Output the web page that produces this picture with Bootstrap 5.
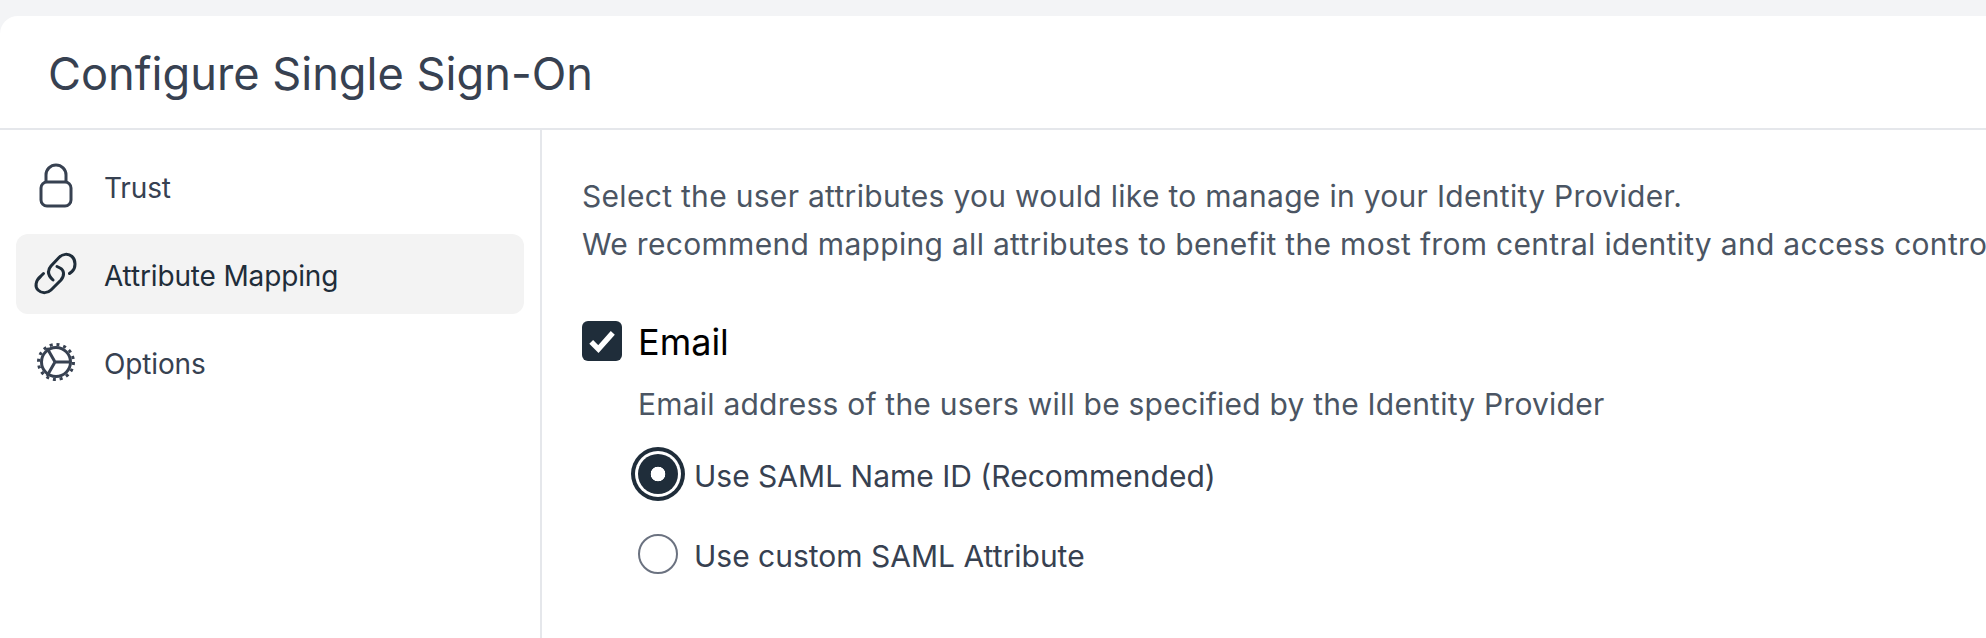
<!DOCTYPE html>
<html lang="en">
<head>
    <meta charset="UTF-8">
    <meta name="viewport" content="width=device-width, initial-scale=1.0">
    <title>Configure Single Sign-On</title>
    <link href="https://cdn.jsdelivr.net/npm/bootstrap@5.3.0/dist/css/bootstrap.min.css" rel="stylesheet">
    <style>
        html, body { height: 100%; overflow: hidden; }
        body { background: #f3f4f6; padding-top: 16px; font-family: Inter, "Liberation Sans", sans-serif; color: #4b5563; }
        .sso-panel { height: 622px; background: #fff; border-top-left-radius: 18px; }
        .sso-head { height: 114px; flex: none; padding: 4px 0 0 48px; border-bottom: 2px solid #e5e7eb; }
        .sso-title { font-size: 45.2px; font-weight: 400; color: #374151; margin: 0; line-height: 56px; }
        .sso-side { width: 542px; flex: none; padding: 16px 16px 0; border-right: 2px solid #e5e7eb; }
        .sso-item { height: 80px; margin-bottom: 8px; padding-left: 16px; border-radius: 12px; font-size: 28px; letter-spacing: -0.15px; color: #374151; gap: 24px; text-decoration: none; }
        .sso-item span { padding-top: 3px; }
        .sso-item.is-active { background: #f3f3f3; color: #1f2d3a; }
        .sso-item svg { width: 48px; height: 40px; flex: none; overflow: visible; }
        .sso-main { padding: 42px 0 0 40px; font-size: 30px; line-height: 48px; white-space: nowrap; }
        .sso-main p { margin: 0; letter-spacing: 0.3px; }
        .sso-check { height: 40px; margin-top: 53px; gap: 16px; }
        .sso-check .form-check-input, .sso-radio .form-check-input { margin: 0; flex: none; width: 40px; height: 40px; float: none; }
        .sso-check .form-check-input { border-radius: 6px; border: 0; }
        .sso-check .form-check-input:checked { background-color: #1f2d3a; background-size: 36px; background-image: url("data:image/svg+xml,%3csvg xmlns='http://www.w3.org/2000/svg' viewBox='0 0 20 20'%3e%3cpath fill='none' stroke='%23fff' stroke-width='3' d='M4 10.5l4 4 8-9'/%3e%3c/svg%3e"); }
        .sso-check label { font-size: 36px; color: #000; line-height: 40px; padding-top: 2px; }
        .sso-main .sso-desc { margin: 19px 0 0 56px; letter-spacing: 0.22px; }
        .sso-radio { height: 40px; margin-left: 56px; gap: 16px; }
        .sso-radio .form-check-input { border: 2px solid #6b7280; }
        .sso-radio .form-check-input:checked { background-color: #1f2d3a; border: 0; background-image: radial-gradient(circle, #fff 7px, #1f2d3a 7.6px); box-shadow: 0 0 0 3px #fff, 0 0 0 7px #1f2d3a; }
        .sso-radio label { color: #374151; line-height: 40px; padding-top: 3px; }
        .sso-radio-first { margin-top: 26px; }
        .sso-radio-next { margin-top: 40px; }
    </style>
</head>
<body>
    <div class="sso-panel d-flex flex-column overflow-hidden">
        <div class="sso-head d-flex align-items-center">
            <h1 class="sso-title">Configure Single Sign-On</h1>
        </div>
        <div class="d-flex flex-grow-1">
            <!-- Steps -->
            <nav class="sso-side">
                <a href="#" class="sso-item d-flex align-items-center">
                    <svg viewBox="0 0 48 40" fill="none" stroke="#374151" stroke-width="3"><path d="M14 15v-6a10 10 0 0 1 20 0v6"/><rect x="9" y="16" width="30" height="24" rx="6"/></svg>
                    <span>Trust</span>
                </a>
                <a href="#" class="sso-item is-active d-flex align-items-center">
                    <svg viewBox="0 0 48 40" fill="none" stroke="#1f2d3a" stroke-width="3" stroke-linecap="round"><path d="M37.500 19.500L40 17.500C44 14 44 6 40 2.500C36-1 30.500 0 27 3.500L19 12C15.500 16 15.500 21 21 26"/><path d="M11.500 19.500L9 22C3 27 3 33 6 36C10 40 16 39 19 36L29 26C33 21 32 16 28 14L25 12.500"/></svg>
                    <span>Attribute Mapping</span>
                </a>
                <a href="#" class="sso-item d-flex align-items-center">
                    <svg viewBox="0 0 48 40" fill="none" stroke="#374151" stroke-width="3"><circle cx="24" cy="20" r="14.500"/><circle cx="24" cy="20" r="17.500" stroke-dasharray="3 3.870"/><path d="M23 20h15M23 20l-8-14M23 20l-8 14"/></svg>
                    <span>Options</span>
                </a>
            </nav>

            <!-- Attribute mapping -->
            <main class="sso-main">
                <p>Select the user attributes you would like to manage in your Identity Provider.</p>
                <p>We recommend mapping all attributes to benefit the most from central identity and access control.</p>

                <div class="sso-check d-flex align-items-center">
                    <input class="form-check-input" type="checkbox" id="email" checked>
                    <label for="email">Email</label>
                </div>
                <p class="sso-desc">Email address of the users will be specified by the Identity Provider</p>

                <div class="sso-radio sso-radio-first d-flex align-items-center">
                    <input class="form-check-input" type="radio" name="source" id="nameId" checked>
                    <label for="nameId">Use SAML Name ID (Recommended)</label>
                </div>
                <div class="sso-radio sso-radio-next d-flex align-items-center">
                    <input class="form-check-input" type="radio" name="source" id="custom">
                    <label for="custom">Use custom SAML Attribute</label>
                </div>
            </main>
        </div>
    </div>
    <script src="https://cdn.jsdelivr.net/npm/bootstrap@5.3.0/dist/js/bootstrap.bundle.min.js"></script>
</body>
</html>
